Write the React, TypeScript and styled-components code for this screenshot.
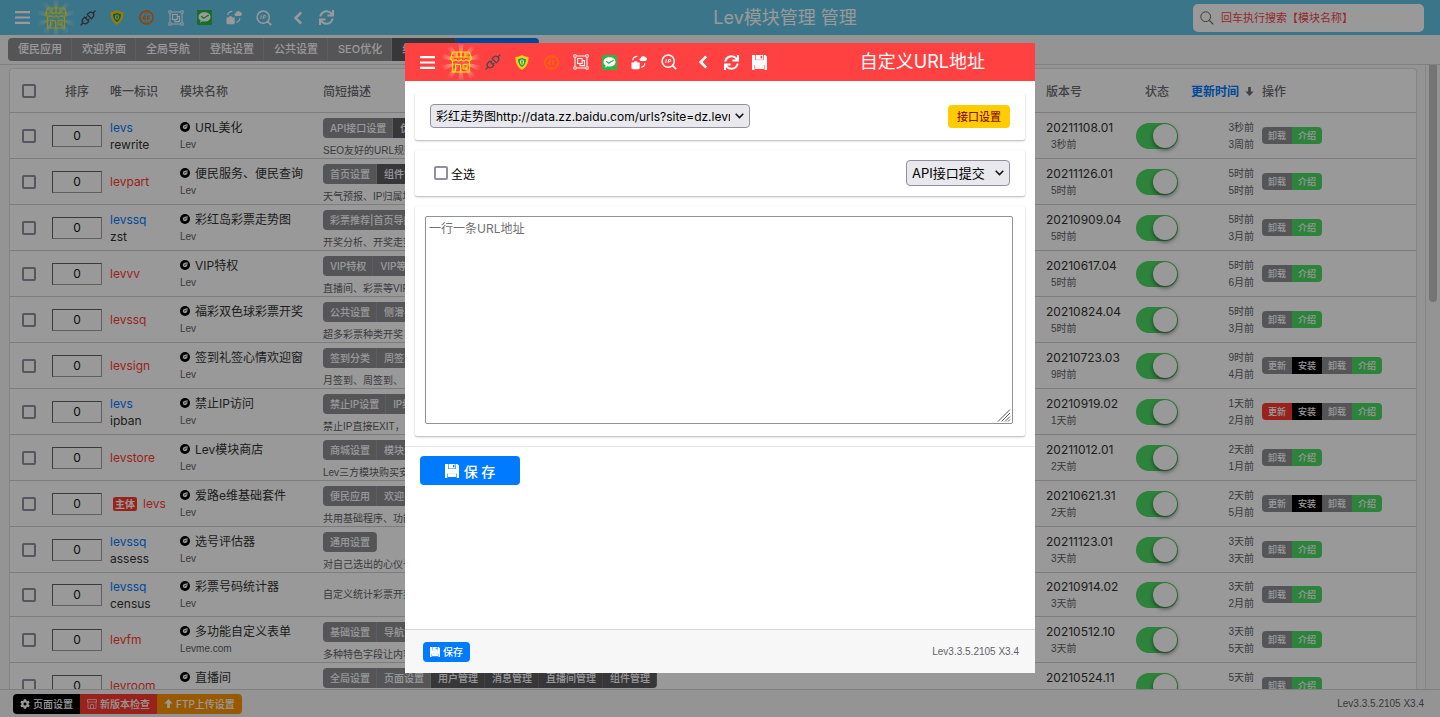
import React from "react";
import styled, { createGlobalStyle } from "styled-components";
import { FaCog, FaSync } from "react-icons/fa";

const ui = '"Inter", "Noto Sans CJK SC", sans-serif';
const plain = '"Liberation Sans", "Noto Sans CJK SC", sans-serif';

const color = {
  blue: "#007aff",
  red: "#ff3b30",
  green: "#4cd964",
  orange: "#ff9500",
  grey: "#8e8e93",
  dark: "#5c5c5f",
  black: "#000000",
};

const GlobalStyle = createGlobalStyle`
  *, *::before, *::after { box-sizing: border-box; }
  body {
    margin: 0;
    font-family: ${ui};
    font-size: 12px;
    color: #333;
    background: #f7f7f8;
  }
  button, input, select, textarea { font-family: inherit; margin: 0; }
  button { cursor: pointer; }
  a { text-decoration: none; color: inherit; }
`;

const Page = styled.div`
  height: 100vh;
  display: flex;
  flex-direction: column;
  overflow: hidden;
`;

const Bar = styled.header<{ $tone: string; $height: number }>`
  flex: none;
  display: flex;
  align-items: center;
  height: ${(p) => p.$height}px;
  background: ${(p) => p.$tone};
  color: #fff;
  overflow: hidden;
`;

const BarStart = styled.div`
  flex: 1;
  display: flex;
  align-items: center;
`;

const BarEnd = styled(BarStart)`
  flex: 0 0 40.5%;
`;

const Tools = styled.nav`
  display: flex;
  align-items: center;
  padding-left: 7px;
`;

const Tool = styled.button<{ $w?: number; $gap?: number }>`
  flex: none;
  width: ${(p) => p.$w ?? 29}px;
  height: 36px;
  margin-left: ${(p) => p.$gap ?? 0}px;
  padding: 0;
  border: 0;
  background: none;
  color: inherit;
  display: flex;
  align-items: center;
  justify-content: center;
  svg { flex: none; display: block; }
`;

const PageTitle = styled.h1`
  margin: 0;
  font-size: 18px;
  font-weight: 400;
  line-height: 24px;
`;

const SearchWrap = styled.label`
  display: flex;
  align-items: center;
  gap: 5px;
  width: 231px;
  height: 28px;
  margin: 0 16px 0 auto;
  padding: 0 7px;
  border-radius: 5px;
  background: #fff;
  color: #666;
  svg { flex: none; }
`;

const SearchInput = styled.input`
  flex: 1;
  min-width: 0;
  border: 0;
  outline: 0;
  background: none;
  font-size: 11px;
  &::placeholder { color: #f5474b; opacity: 1; }
`;

const TabBar = styled.nav`
  flex: none;
  display: flex;
  height: 30px;
  padding: 3px 8px 0;
  border-bottom: 1px solid #d8d8da;
`;

const Tab = styled.a<{ $tone?: string }>`
  height: 23px;
  padding: 0 10px;
  background: ${(p) => p.$tone ?? color.grey};
  box-shadow: inset -1px 0 0 rgba(255, 255, 255, 0.12);
  color: #fff;
  font-size: 11px;
  font-weight: 500;
  line-height: 23px;
  white-space: nowrap;
  &:first-child { border-radius: 4px 0 0 4px; }
  &:last-child { border-radius: 0 4px 4px 0; }
`;

const Main = styled.main`
  flex: 1;
  min-height: 0;
  display: flex;
`;

const Panel = styled.section`
  flex: 1;
  min-width: 0;
  padding: 4px 9px 0 10px;
  overflow: hidden;
  border-right: 1px solid #e2e2e4;
`;

const ScrollTrack = styled.div`
  flex: none;
  width: 14px;
  padding: 0 3px;
`;

const ScrollThumb = styled.div`
  height: 38%;
  border-radius: 0 0 4px 4px;
  background: #c1c1c4;
`;

const Grid = styled.table`
  width: 100%;
  table-layout: fixed;
  border-collapse: separate;
  border-spacing: 0;
  background: #fff;
  border-radius: 2px;
  box-shadow: 0 0 2px rgba(0, 0, 0, 0.35);
  th, td {
    padding: 0 4px;
    border-bottom: 1px solid #d0d0d2;
    overflow: hidden;
    white-space: nowrap;
  }
  td { text-align: left; }
`;

const HeadCell = styled.th<{ $align?: string }>`
  height: 44px;
  color: #6d6d72;
  font-size: 12px;
  font-weight: 500;
  text-align: ${(p) => p.$align ?? "left"};
`;

const Row = styled.tr<{ $short?: boolean }>`
  td { height: ${(p) => (p.$short ? 44 : 46)}px; }
`;

const SortLink = styled.a`
  color: ${color.blue};
  font-weight: 700;
  margin-right: 6px;
`;

const Check = styled.input`
  appearance: none;
  flex: none;
  display: block;
  width: 14px;
  height: 14px;
  margin: 0 auto;
  border: 2px solid #8f8f9d;
  border-radius: 2px;
  background: #fff;
`;

const OrderInput = styled.input`
  display: block;
  width: 50px;
  height: 22px;
  padding: 0;
  border: 1px solid;
  border-color: #636366 #a0a0a3 #a0a0a3 #636366;
  background: #fff;
  color: #111;
  font-size: 12px;
  text-align: center;
`;

const Line = styled.div<{ $tone?: string }>`
  color: ${(p) => p.$tone ?? "#333"};
  font-size: 12px;
  line-height: 17px;
`;

const Small = styled.div<{ $indent?: boolean }>`
  padding-left: ${(p) => (p.$indent ? 5 : 0)}px;
  color: #626266;
  font-family: ${plain};
  font-size: 10px;
  line-height: 17px;
`;

const NameLine = styled(Line)`
  display: flex;
  align-items: center;
  gap: 5px;
`;

const Badge = styled.span`
  display: inline-block;
  margin: 0 6px 0 3px;
  padding: 0 2px;
  border-radius: 2px;
  background: ${color.red};
  color: #fff;
  font-size: 10px;
  font-weight: 700;
  line-height: 14px;
`;

const Desc = styled.div<{ $tagged: boolean }>`
  display: flex;
  flex-direction: column;
  align-items: flex-start;
  gap: 6px;
  padding-top: ${(p) => (p.$tagged ? 4 : 0)}px;
`;

const DescText = styled.div`
  color: #626266;
  font-family: ${plain};
  font-size: 10px;
  line-height: 14px;
`;

const Group = styled.div`
  display: inline-flex;
  border-radius: 4px;
  overflow: hidden;
  vertical-align: middle;
`;

const Chip = styled.button<{ $tone?: string }>`
  height: 20px;
  padding: 0 7px;
  border: 0;
  background: ${(p) => p.$tone ?? color.grey};
  box-shadow: inset -1px 0 0 rgba(255, 255, 255, 0.12);
  color: #fff;
  font-size: 10px;
  font-weight: 500;
  line-height: 20px;
`;

const Op = styled.button<{ $tone: string }>`
  height: 17px;
  padding: 0 6px;
  border: 0;
  background: ${(p) => p.$tone};
  color: #fff;
  font-size: 9px;
  font-weight: 500;
  line-height: 17px;
`;

const Switch = styled.input`
  appearance: none;
  display: block;
  width: 42px;
  height: 26px;
  padding: 1px;
  border-radius: 13px;
  background: ${color.green};
  &::before {
    content: "";
    display: block;
    width: 24px;
    height: 24px;
    margin-left: auto;
    border-radius: 50%;
    background: #fff;
    box-shadow: 0 2px 4px rgba(0, 0, 0, 0.5);
  }
`;

const Times = styled.div`
  text-align: right;
`;

const Footer = styled.footer<{ $height: number; $side: number }>`
  flex: none;
  display: flex;
  align-items: center;
  justify-content: space-between;
  height: ${(p) => p.$height}px;
  padding: 0 16px 0 ${(p) => p.$side}px;
  border-top: 1px solid #d4d4d6;
  background: #f7f7f8;
`;

const FooterButton = styled.button<{ $tone: string }>`
  display: flex;
  align-items: center;
  gap: 3px;
  height: 20px;
  padding: 0 7px;
  border: 0;
  background: ${(p) => p.$tone};
  color: #fff;
  font-size: 10px;
  font-weight: 500;
  line-height: 20px;
`;

const Version = styled.span`
  color: #626266;
  font-family: ${plain};
  font-size: 10px;
`;

const Shade = styled.div`
  position: fixed;
  inset: 0;
  display: flex;
  justify-content: center;
  padding: 43px 0 44px;
  background: rgba(0, 0, 0, 0.4);
`;

const Dialog = styled.div`
  width: 630px;
  max-width: 100%;
  display: flex;
  flex-direction: column;
  background: #fff;
`;

const DialogTitle = styled.h2`
  margin: 0 50px 0 auto;
  font-size: 18px;
  font-weight: 400;
  line-height: 24px;
  white-space: nowrap;
`;

const DialogForm = styled.form`
  flex: 1;
  min-height: 0;
  display: flex;
  flex-direction: column;
`;

const DialogBody = styled.div`
  flex: 1;
  min-height: 0;
  overflow: hidden;
`;

const Fields = styled.div`
  display: flex;
  flex-direction: column;
  gap: 10px;
  padding: 11px 10px 10px;
  border-bottom: 1px solid #e8e8ea;
`;

const Card = styled.div<{ $height?: number; $pad: string }>`
  display: flex;
  align-items: center;
  justify-content: space-between;
  min-height: ${(p) => p.$height ?? 0}px;
  padding: ${(p) => p.$pad};
  border-radius: 2px;
  background: #fff;
  box-shadow: 0 1px 2px rgba(0, 0, 0, 0.3);
`;

const SelectWrap = styled.div<{ $w: number }>`
  position: relative;
  width: ${(p) => p.$w}px;
  svg {
    position: absolute;
    right: 6px;
    top: 50%;
    margin-top: -3px;
    pointer-events: none;
  }
`;

const Select = styled.select<{ $h: number; $size: number }>`
  appearance: none;
  display: block;
  width: 100%;
  height: ${(p) => p.$h}px;
  padding: 0 19px 0 5px;
  border: 1px solid #8f8f9d;
  border-radius: 4px;
  background: #e9e9ed;
  color: #000;
  font-size: ${(p) => p.$size}px;
`;

const ApiButton = styled.button`
  height: 23px;
  padding: 0 9px;
  border: 0;
  border-radius: 4px;
  background: #ffcc00;
  color: #8c1500;
  font-size: 11px;
  font-weight: 500;
`;

const CheckLabel = styled.label`
  display: flex;
  align-items: center;
  gap: 3px;
  color: #000;
  font-size: 12px;
`;

const AreaWrap = styled.div`
  position: relative;
  flex: 1;
  svg {
    position: absolute;
    right: 2px;
    bottom: 2px;
    pointer-events: none;
  }
`;

const UrlArea = styled.textarea`
  display: block;
  width: 100%;
  height: 208px;
  padding: 3px;
  border: 1px solid #8f8f9d;
  border-radius: 2px;
  background: #fff;
  color: #333;
  font-size: 12px;
  line-height: 17px;
  resize: vertical;
  &::placeholder { color: #6f6f74; opacity: 1; }
  &::-webkit-resizer { background: transparent; }
`;

const SaveButton = styled.button`
  display: flex;
  align-items: center;
  justify-content: center;
  gap: 5px;
  width: 100px;
  height: 29px;
  margin: 9px 15px;
  padding: 0;
  border: 0;
  border-radius: 4px;
  background: ${color.blue};
  color: #fff;
  font-size: 14px;
  font-weight: 500;
`;

/* ---------- icons ---------- */

const MenuIcon = () => (
  <svg width="15" height="13" viewBox="0 0 15 13">
    <path d="M0 1.2h15M0 6.5h15M0 11.8h15" stroke="currentColor" strokeWidth="2.2" />
  </svg>
);

const rays = [0, 38, 72, 108, 142, 180, 218, 252, 288, 322];

const StoreIcon = () => (
  <svg width="38" height="36" viewBox="0 0 38 36">
    <defs>
      <radialGradient id="store-glow" gradientUnits="userSpaceOnUse" cx="19" cy="18" r="20">
        <stop offset="0" stopColor="#ffe9a0" stopOpacity="0.2" />
        <stop offset="0.55" stopColor="#fff2c0" stopOpacity="0.4" />
        <stop offset="1" stopColor="#ffffff" stopOpacity="0" />
      </radialGradient>
    </defs>
    {rays.map((a) => (
      <path key={a} d="M19 18 16-2h6z" fill="url(#store-glow)" transform={`rotate(${a} 19 18)`} />
    ))}
    <g fill="none" stroke="#ffee00" strokeWidth="1.2" strokeLinejoin="round">
      <path d="M12 8h14q1.500 0 2 1.500l1 3.500v2.500q-1 1.500-2.500 1.500T24 15.500q-1 1.500-2.500 1.500T19 15.500q-1 1.500-2.500 1.500T14 15.500q-1 1.500-2.500 1.500T9 15.500V13l1-3.500Q10.500 8 12 8z" />
      <path d="M9 13h20M15 8v5M19 8v5M23 8v5M10.500 17v11h17V17" />
      <path d="M13.500 28v-7.500h5V28M21 20.500h4v4.500h-4z" strokeWidth="1" />
    </g>
  </svg>
);

const PlugIcon = () => (
  <svg width="16" height="16" viewBox="0 0 16 16" fill="none" stroke="#4b4b4f" strokeWidth="1.3" strokeLinecap="round">
    <path d="M1 15l2-2M13 3l2-2M3 13c-1.200-1.400-1-3.200.2-4.400L4.600 7.200l4.200 4.200-1.400 1.400C6.200 14 4.400 14.200 3 13zM13 3c-1.400-1.200-3.200-1-4.400.2L7.200 4.600l4.200 4.200 1.400-1.400C14 6.200 14.200 4.400 13 3zM5.600 8.200l1.300-1.300M7.800 10.400l1.300-1.300" />
  </svg>
);

const ShieldIcon = () => (
  <svg width="14" height="15" viewBox="0 0 14 15">
    <path d="M7 0c2 1.300 4.200 1.900 6.600 2-.1 5.600-1.600 10-6.600 13C2 12 .5 7.600.4 2 2.800 1.900 5 1.300 7 0z" fill="#f9c81c" />
    <path d="M7 3c1.300.8 2.600 1.100 4 1.200-.2 3.400-1.200 6-4 7.800-2.800-1.800-3.800-4.400-4-7.800C4.400 4.100 5.700 3.800 7 3z" fill="#0f9d58" />
    <ellipse cx="7" cy="7.200" rx="2.100" ry="2.700" fill="#e7e35a" />
    <path d="M7 5.600v3.200" stroke="#0f9d58" strokeWidth="1.300" />
  </svg>
);

const CoinIcon = () => (
  <svg width="15" height="15" viewBox="0 0 15 15" fill="none" stroke="#ff6a00">
    <circle cx="7.500" cy="7.500" r="6.600" strokeWidth="1.500" />
    <path d="M3.700 8.700 6 5.300v4.600M3.700 8.700h3.200" strokeWidth="1" />
    <path d="M8.500 5.200v4.700M11.200 5.200 8.800 7.600l2.400 2.300" strokeWidth="1" />
    <path d="M5 3.400q2.500-1.200 5 0M5 11.700q2.500 1.200 5 0" strokeWidth=".7" />
  </svg>
);

const GroupIcon = () => (
  <svg width="16" height="16" viewBox="0 0 16 16" fill="none" stroke="currentColor">
    <path d="M3.300 2h9.400M3.300 14h9.400M2 3.300v9.400M14 3.300v9.400" strokeWidth="1" />
    <path d="M.8.800h2.400v2.400H.800zM12.800.800h2.400v2.400h-2.400zM.800 12.800h2.400v2.400H.800zM12.800 12.800h2.400v2.400h-2.400z" strokeWidth=".9" />
    <path d="M4.600 4.500h4.600v5H4.600zM9.300 6.600h2.200v5H7v-2" strokeWidth="1.100" />
  </svg>
);

const ChatIcon = () => (
  <svg width="15" height="15" viewBox="0 0 15 15">
    <rect width="15" height="15" rx="1" fill="#2bb741" />
    <path d="M7.500 2.200c3.500 0 6 2 6 4.700s-2.500 4.700-6 4.700c-.7 0-1.400-.1-2-.3l-2.300 1.500.4-2.300C2.300 9.600 1.500 8.300 1.500 6.900c0-2.700 2.500-4.700 6-4.700z" fill="#fff" />
    <path d="M4.200 6.200l2.500 2.100 5-3.200" fill="none" stroke="#2bb741" strokeWidth="1.200" />
  </svg>
);

const CloudBoxIcon = () => (
  <svg width="16" height="15" viewBox="0 0 16 15">
    <path d="M.5 7.500h2l.9-1.300h2.400l.9 1.300h2v5.200q0 1.600-1.600 1.600H2.100q-1.600 0-1.600-1.600z" fill="currentColor" />
    <path d="M9.200 5.900c-1.200-.9-.8-2.700.7-2.900C10.300 1 12.800.1 14 2c1.700.1 2.500 2 1.500 3.300-.4.500-.8.600-1.400.6z" fill="currentColor" />
    <path d="M1.800 5.200C1.900 2.900 3.700 1.500 6.300 1.400M13.800 8.200c-.1 2.300-1.300 3.700-3.600 4.100" fill="none" stroke="currentColor" strokeWidth="1.200" />
  </svg>
);

const IpSearchIcon = () => (
  <svg width="16" height="16" viewBox="0 0 16 16" fill="none" stroke="currentColor">
    <circle cx="7.200" cy="7.200" r="6.100" strokeWidth="1.500" />
    <path d="M11.600 11.600 15.200 15.200" strokeWidth="1.900" />
    <path d="M5.300 5.300 4.700 9M7.100 9l.6-3.500h1.300c1.300 0 1.200 1.900-.2 1.900H7.500" strokeWidth="1" />
  </svg>
);

const BackIcon = () => (
  <svg width="10" height="14" viewBox="0 0 10 14">
    <path d="M8.200 1.300 2.600 7l5.600 5.700" fill="none" stroke="currentColor" strokeWidth="2.600" />
  </svg>
);

const FloppyIcon = ({ size = 14 }: { size?: number }) => (
  <svg width={size} height={size} viewBox="0 0 14 14">
    <path
      d="M0 0h3v5h8V0h1.400L14 1.600V14h-2.300V9.300H2.300V14H0zM3.600 0h6.800v4.500H3.600zM8 .9v2.300h1.400V.9zM2.900 9h8.200v4H2.900z"
      fill="currentColor"
      fillRule="evenodd"
    />
    <path d="M2 5h10v4.500H2z" fill="currentColor" />
  </svg>
);

const SearchIcon = () => (
  <svg width="14" height="14" viewBox="0 0 14 14" fill="none" stroke="currentColor">
    <circle cx="5.700" cy="5.700" r="4.900" />
    <path d="M9.300 9.300 13.300 13.300" strokeWidth="1.200" />
  </svg>
);

const ArrowIcon = ({ size = 9, down = false }: { size?: number; down?: boolean }) => (
  <svg width={size} height={size} viewBox="0 0 10 10">
    <path d={down ? "M3.500 0h3v5H9.500L5 10 .5 5h3z" : "M3.500 10h3V5H9.500L5 0 .5 5h3z"} fill="currentColor" />
  </svg>
);

const ShopIcon = () => (
  <svg width="10" height="10" viewBox="0 0 10 10" fill="none" stroke="currentColor" strokeWidth=".8" opacity=".8">
    <path d="M.5.500h9v2.500h-9zM1 3v6.500h8V3M3.500 9.500V5.500h3v4" />
  </svg>
);

const CompassIcon = () => (
  <svg width="10" height="10" viewBox="0 0 10 10">
    <circle cx="5" cy="5" r="5" fill="#000" />
    <path d="M7.800 2.200 7.300 5.200Q6.900 7.300 4.900 7.300 2.700 7.100 2.700 5.100 2.800 3.300 4.800 2.800z" fill="#fff" />
    <path d="M4.200 4.600 5 5.400 6.600 3.600" fill="none" stroke="#000" strokeWidth=".7" />
  </svg>
);

const CaretIcon = () => (
  <svg width="9" height="6" viewBox="0 0 9 6">
    <path d="M.7.800 4.500 4.600 8.300.800" fill="none" stroke="#111" strokeWidth="1.500" />
  </svg>
);

const GripIcon = () => (
  <svg width="14" height="13" viewBox="0 0 14 13">
    <path d="M1 12.500 13 .5M4.500 12.500 13 4M8 12.500 13 7.500M11 12.500l2-2" stroke="#55555a" strokeWidth="1" />
  </svg>
);

/* ---------- data ---------- */

type Module = {
  id: string;
  sub?: string;
  main?: boolean;
  name: string;
  author?: string;
  tags: string[];
  darkFrom?: number;
  desc: string;
  version: string;
  ago: string;
  since: string;
  full?: "plain" | "hot";
};

const modules: Module[] = [
  { id: "levs", sub: "rewrite", name: "URL美化", tags: ["API接口设置", "伪静态规则"], darkFrom: 1, desc: "SEO友好的URL规则", version: "20211108.01", ago: "3秒前", since: "3周前" },
  { id: "levpart", name: "便民服务、便民查询", tags: ["首页设置", "组件管理"], darkFrom: 1, desc: "天气预报、IP归属地", version: "20211126.01", ago: "5时前", since: "5时前" },
  { id: "levssq", sub: "zst", name: "彩红岛彩票走势图", tags: ["彩票推荐|首页导航"], desc: "开奖分析、开奖走势", version: "20210909.04", ago: "5时前", since: "3月前" },
  { id: "levvv", name: "VIP特权", tags: ["VIP特权", "VIP等级"], desc: "直播间、彩票等VIP特权", version: "20210617.04", ago: "5时前", since: "6月前" },
  { id: "levssq", name: "福彩双色球彩票开奖", tags: ["公共设置", "侧滑导航"], desc: "超多彩票种类开奖", version: "20210824.04", ago: "5时前", since: "3月前" },
  { id: "levsign", name: "签到礼签心情欢迎窗", tags: ["签到分类", "周签到"], desc: "月签到、周签到、", version: "20210723.03", ago: "9时前", since: "4月前", full: "plain" },
  { id: "levs", sub: "ipban", name: "禁止IP访问", tags: ["禁止IP设置", "IP组"], desc: "禁止IP直接EXIT，", version: "20210919.02", ago: "1天前", since: "2月前", full: "hot" },
  { id: "levstore", name: "Lev模块商店", tags: ["商城设置", "模块分类"], desc: "Lev三方模块购买安装", version: "20211012.01", ago: "2天前", since: "1月前" },
  { id: "levs", main: true, name: "爱路e维基础套件", tags: ["便民应用", "欢迎界面"], desc: "共用基础程序、功能", version: "20210621.31", ago: "2天前", since: "5月前", full: "plain" },
  { id: "levssq", sub: "assess", name: "选号评估器", tags: ["通用设置"], desc: "对自己选出的心仪号码", version: "20211123.01", ago: "3天前", since: "3天前" },
  { id: "levssq", sub: "census", name: "彩票号码统计器", tags: [], desc: "自定义统计彩票开奖", version: "20210914.02", ago: "3天前", since: "2月前" },
  { id: "levfm", name: "多功能自定义表单", author: "Levme.com", tags: ["基础设置", "导航设置"], desc: "多种特色字段让内容", version: "20210512.10", ago: "3天前", since: "5天前" },
  { id: "levroom", name: "直播间", tags: ["全局设置", "页面设置", "用户管理", "消息管理", "直播间管理", "组件管理"], darkFrom: 2, desc: "直播间", version: "20210524.11", ago: "5天前", since: "6月前" },
];

const tabs = ["便民应用", "欢迎界面", "全局导航", "登陆设置", "公共设置", "SEO优化"];

const ToolBar = ({ save }: { save?: boolean }) => (
  <Tools>
    <Tool type="button" $w={31} aria-label="菜单"><MenuIcon /></Tool>
    <Tool type="button" $w={35} aria-label="商店"><StoreIcon /></Tool>
    <Tool type="button" aria-label="插件"><PlugIcon /></Tool>
    <Tool type="button" aria-label="安全"><ShieldIcon /></Tool>
    <Tool type="button" $w={30} aria-label="彩票"><CoinIcon /></Tool>
    <Tool type="button" aria-label="组件"><GroupIcon /></Tool>
    <Tool type="button" aria-label="微信"><ChatIcon /></Tool>
    <Tool type="button" $w={30} aria-label="云存储"><CloudBoxIcon /></Tool>
    <Tool type="button" aria-label="IP查询"><IpSearchIcon /></Tool>
    <Tool type="button" $w={28} $gap={6} aria-label="返回"><BackIcon /></Tool>
    <Tool type="button" $w={28} aria-label="刷新"><FaSync size={15} /></Tool>
    {save && <Tool type="button" $w={28} aria-label="保存"><FloppyIcon size={15} /></Tool>}
  </Tools>
);

const ModuleRow = ({ m }: { m: Module }) => (
  <Row $short={m.tags.length === 0}>
    <td><Check type="checkbox" aria-label={`选择 ${m.name}`} /></td>
    <td><OrderInput defaultValue="0" aria-label={`排序 ${m.name}`} /></td>
    <td>
      <Line $tone={m.sub ? color.blue : color.red}>
        {m.main && <Badge>主体</Badge>}
        {m.id}
      </Line>
      {m.sub && <Line>{m.sub}</Line>}
    </td>
    <td>
      <NameLine><CompassIcon />{m.name}</NameLine>
      <Small>{m.author ?? "Lev"}</Small>
    </td>
    <td>
      <Desc $tagged={m.tags.length > 0}>
        {m.tags.length > 0 && (
          <Group>
            {m.tags.map((t, i) => (
              <Chip type="button" key={t} $tone={m.darkFrom !== undefined && i >= m.darkFrom ? color.dark : color.grey}>{t}</Chip>
            ))}
          </Group>
        )}
        <DescText>{m.desc}</DescText>
      </Desc>
    </td>
    <td>
      <Line>{m.version}</Line>
      <Small $indent>{m.ago}</Small>
    </td>
    <td><Switch type="checkbox" role="switch" defaultChecked aria-label={`状态 ${m.name}`} /></td>
    <td>
      <Times>
        <Small>{m.ago}</Small>
        <Small>{m.since}</Small>
      </Times>
    </td>
    <td>
      <Group>
        {m.full && <Op type="button" $tone={m.full === "hot" ? color.red : color.grey}>更新</Op>}
        {m.full && <Op type="button" $tone={color.black}>安装</Op>}
        <Op type="button" $tone={color.grey}>卸载</Op>
        <Op type="button" $tone={color.green}>介绍</Op>
      </Group>
    </td>
  </Row>
);

const columnWidths = [38, 58, 70, 143, undefined, 90, 50, 76, 158];

const UrlDialog = () => (
  <Shade>
    <Dialog role="dialog" aria-label="自定义URL地址">
      <Bar $tone="#ff4141" $height={38}>
        <ToolBar save />
        <DialogTitle>自定义URL地址</DialogTitle>
      </Bar>
      <DialogForm onSubmit={(e) => e.preventDefault()}>
        <DialogBody>
          <Fields>
            <Card $height={48} $pad="0 15px">
              <SelectWrap $w={320}>
                <Select $h={24} $size={12} aria-label="提交接口">
                  <option>彩红走势图http://data.zz.baidu.com/urls?site=dz.levme.com</option>
                </Select>
                <CaretIcon />
              </SelectWrap>
              <ApiButton type="button">接口设置</ApiButton>
            </Card>
            <Card $height={46} $pad="0 15px 0 19px">
              <CheckLabel><Check type="checkbox" />全选</CheckLabel>
              <SelectWrap $w={104}>
                <Select $h={26} $size={13} aria-label="提交方式">
                  <option>API接口提交</option>
                </Select>
                <CaretIcon />
              </SelectWrap>
            </Card>
            <Card $pad="10px 12px 12px 10px">
              <AreaWrap>
                <UrlArea placeholder="一行一条URL地址" aria-label="URL地址" />
                <GripIcon />
              </AreaWrap>
            </Card>
          </Fields>
          <SaveButton type="submit"><FloppyIcon />保 存</SaveButton>
        </DialogBody>
        <Footer $height={44} $side={18}>
          <Group>
            <FooterButton type="submit" $tone={color.blue}><FloppyIcon size={10} />保存</FooterButton>
          </Group>
          <Version>Lev3.3.5.2105 X3.4</Version>
        </Footer>
      </DialogForm>
    </Dialog>
  </Shade>
);

export default function App() {
  return (
    <>
      <GlobalStyle />
      <Page>
        <Bar $tone="#62c3e6" $height={35}>
          <BarStart><ToolBar /></BarStart>
          <PageTitle>Lev模块管理 管理</PageTitle>
          <BarEnd>
            <SearchWrap>
              <SearchIcon />
              <SearchInput placeholder="回车执行搜索【模块名称】" />
            </SearchWrap>
          </BarEnd>
        </Bar>
        <TabBar>
          {tabs.map((t) => <Tab href="#" key={t}>{t}</Tab>)}
          <Tab href="#" $tone={color.dark}>组件管理</Tab>
          <Tab href="#" $tone={color.blue}>Lev模块管理</Tab>
        </TabBar>
        <Main>
          <Panel>
            <Grid>
              <colgroup>
                {columnWidths.map((w, i) => <col key={i} width={w} />)}
              </colgroup>
              <thead>
                <tr>
                  <HeadCell><Check type="checkbox" aria-label="全部选择" /></HeadCell>
                  <HeadCell $align="center">排序</HeadCell>
                  <HeadCell>唯一标识</HeadCell>
                  <HeadCell>模块名称</HeadCell>
                  <HeadCell>简短描述</HeadCell>
                  <HeadCell>版本号</HeadCell>
                  <HeadCell $align="center">状态</HeadCell>
                  <HeadCell $align="right"><SortLink href="#">更新时间</SortLink><ArrowIcon down /></HeadCell>
                  <HeadCell>操作</HeadCell>
                </tr>
              </thead>
              <tbody>
                {modules.map((m, i) => <ModuleRow key={i} m={m} />)}
              </tbody>
            </Grid>
          </Panel>
          <ScrollTrack><ScrollThumb /></ScrollTrack>
        </Main>
        <Footer $height={28} $side={13}>
          <Group>
            <FooterButton type="button" $tone={color.black}><FaCog size={10} />页面设置</FooterButton>
            <FooterButton type="button" $tone={color.red}><ShopIcon />新版本检查</FooterButton>
            <FooterButton type="button" $tone={color.orange}><ArrowIcon />FTP上传设置</FooterButton>
          </Group>
          <Version>Lev3.3.5.2105 X3.4</Version>
        </Footer>
      </Page>
      <UrlDialog />
    </>
  );
}
